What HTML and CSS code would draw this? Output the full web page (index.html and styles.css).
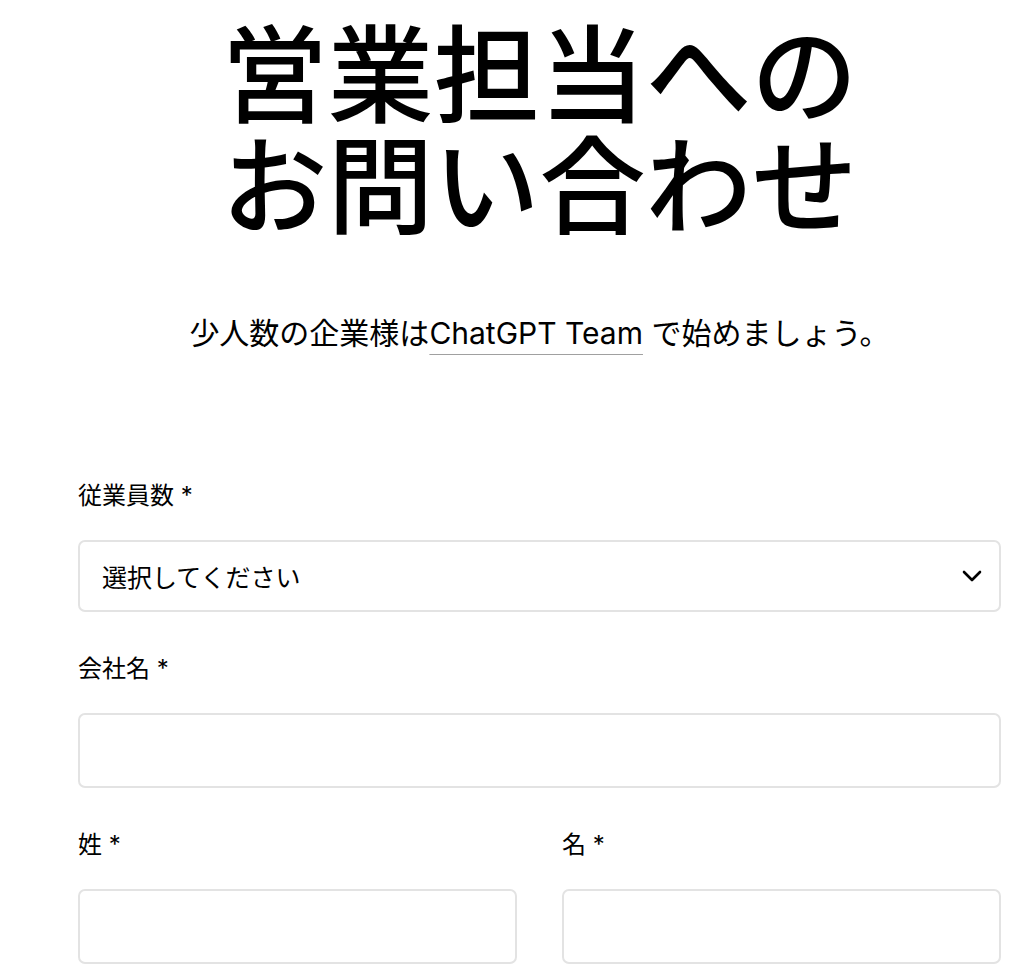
FILE: index.html
```html
<!DOCTYPE html>
<html lang="ja">
<head>
<meta charset="utf-8">
<link rel="stylesheet" href="styles.css">
</head>
<body>
<main class="page">
  <h1 class="title"><span class="title-line">営業担当への</span><span class="title-line">お問い合わせ</span></h1>
  <p class="lead">少人数の企業様は<a class="lead-link" href="#">ChatGPT Team</a> で始めましょう。</p>
  <form class="form">
    <div class="field">
      <label class="label">従業員数 *</label>
      <div class="select">
        <span class="select-text">選択してください</span>
        <svg class="chevron" width="20" height="12" viewBox="0 0 20 12"><path d="M2 2 L10 10 L18 2" fill="none" stroke="#000" stroke-width="2.6" stroke-linecap="round" stroke-linejoin="round"/></svg>
      </div>
    </div>
    <div class="field">
      <label class="label">会社名 *</label>
      <div class="input"></div>
    </div>
    <div class="row">
      <div class="field">
        <label class="label">姓 *</label>
        <div class="input"></div>
      </div>
      <div class="field">
        <label class="label">名 *</label>
        <div class="input"></div>
      </div>
    </div>
  </form>
</main>
</body>
</html>
```

FILE: styles.css
```css
html, body {
  margin: 0;
  padding: 0;
  background: #fff;
}
body {
  font-family: Inter, "Noto Sans CJK JP", sans-serif;
  color: #0d0d0d;
  overflow: hidden;
}
.page {
  width: 923px;
  margin-left: 78px;
}
.title {
  margin: 13px 0 0;
  font-family: "Noto Sans CJK JP", sans-serif;
  font-size: 106px;
  font-weight: 500;
  line-height: 111px;
  text-align: center;
  color: #000;
}
.title-line {
  display: block;
  height: 111px;
}
.lead {
  margin: 78px 0 0;
  font-size: 30px;
  line-height: 40px;
  text-align: center;
  color: #000;
}
.lead-link {
  color: #000;
  text-decoration: underline;
  text-decoration-color: #a0a0a0;
  text-decoration-thickness: 1px;
  text-underline-offset: 10px;
}
.form {
  margin-top: 131px;
  display: flex;
  flex-direction: column;
  gap: 45px;
}
.field {
  display: flex;
  flex-direction: column;
  gap: 32px;
}
.label {
  font-size: 24px;
  line-height: 24px;
  color: #000;
}
.select, .input {
  box-sizing: border-box;
  border: 2px solid #e3e3e3;
  border-radius: 7px;
}
.select {
  height: 72px;
  display: flex;
  align-items: center;
  justify-content: space-between;
  padding: 0 17px 0 22px;
}
.select-text {
  font-size: 25px;
  color: #000;
}
.input {
  height: 75px;
}
.row {
  display: grid;
  grid-template-columns: 1fr 1fr;
  column-gap: 45px;
}
```
